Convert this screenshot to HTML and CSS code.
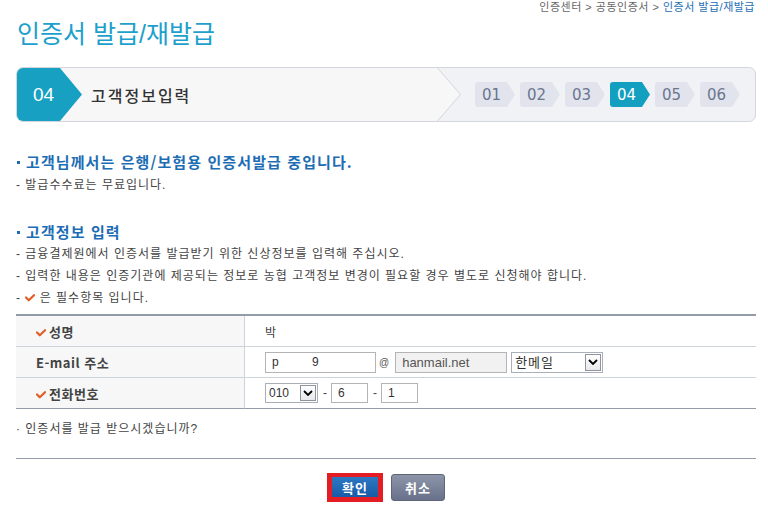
FILE: index.html
```html
<!DOCTYPE html>
<html lang="ko">
<head>
<meta charset="utf-8">
<title>인증서 발급/재발급</title>
<link rel="stylesheet" href="styles.css">
</head>
<body>
<div class="page">
  <div class="crumb">인증센터 &gt; 공동인증서 &gt; <span class="crumb-on">인증서 발급/재발급</span></div>
  <h1 class="title">인증서 발급/재발급</h1>

  <div class="stepbar">
    <div class="step-cur">
      <div class="step-cur-in">
        <span class="badge">04</span>
        <span class="step-name">고객정보입력</span>
      </div>
    </div>
    <ol class="steps">
      <li class="step">01</li>
      <li class="step">02</li>
      <li class="step">03</li>
      <li class="step step-on">04</li>
      <li class="step">05</li>
      <li class="step">06</li>
    </ol>
  </div>

  <h2 class="sec sec-first">고객님께서는 은행/보험용 인증서발급 중입니다.</h2>
  <p class="desc">- 발급수수료는 무료입니다.</p>

  <h2 class="sec sec-second">고객정보 입력</h2>
  <p class="desc">- 금융결제원에서 인증서를 발급받기 위한 신상정보를 입력해 주십시오.</p>
  <p class="desc">- 입력한 내용은 인증기관에 제공되는 정보로 농협 고객정보 변경이 필요할 경우 별도로 신청해야 합니다.</p>
  <p class="desc">- <svg class="chk" width="10" height="8" viewBox="0 0 10 8"><polyline points="1,3.5 3.8,6.3 9,1.2" fill="none" stroke="#e2612b" stroke-width="2.3" stroke-linecap="round" stroke-linejoin="round"/></svg> 은 필수항목 입니다.</p>

  <table class="form">
    <tr>
      <th class="lbl"><svg class="chk" width="10" height="8" viewBox="0 0 10 8"><polyline points="1,3.5 3.8,6.3 9,1.2" fill="none" stroke="#e2612b" stroke-width="2.3" stroke-linecap="round" stroke-linejoin="round"/></svg>성명</th>
      <td class="val">박</td>
    </tr>
    <tr>
      <th class="lbl">E-mail 주소</th>
      <td class="val">
        <div class="fields">
          <input class="inp inp-id" type="text" value="p          9">
          <span class="at">@</span>
          <input class="inp inp-dom" type="text" value="hanmail.net" readonly>
          <span class="sel sel-mail"><select class="sel-box"><option>한메일</option></select><span class="sel-arrow"><svg width="10" height="6" viewBox="0 0 10 6"><polyline points="1,1 5,5 9,1" fill="none" stroke="#000" stroke-width="1.8"/></svg></span></span>
        </div>
      </td>
    </tr>
    <tr>
      <th class="lbl"><svg class="chk" width="10" height="8" viewBox="0 0 10 8"><polyline points="1,3.5 3.8,6.3 9,1.2" fill="none" stroke="#e2612b" stroke-width="2.3" stroke-linecap="round" stroke-linejoin="round"/></svg>전화번호</th>
      <td class="val">
        <div class="fields">
          <span class="sel sel-tel"><select class="sel-box"><option>010</option></select><span class="sel-arrow"><svg width="10" height="6" viewBox="0 0 10 6"><polyline points="1,1 5,5 9,1" fill="none" stroke="#000" stroke-width="1.8"/></svg></span></span>
          <span class="dash">-</span>
          <input class="inp inp-tel" type="text" value="6">
          <span class="dash">-</span>
          <input class="inp inp-tel" type="text" value="1">
        </div>
      </td>
    </tr>
  </table>

  <p class="ask">· 인증서를 발급 받으시겠습니까?</p>
  <hr class="rule">

  <div class="btns">
    <button class="btn btn-ok" type="button">확인</button>
    <button class="btn btn-cancel" type="button">취소</button>
  </div>
</div>
</body>
</html>
```

FILE: styles.css
```css
html, body {
  margin: 0;
  padding: 0;
  background: #fff;
}
body {
  font-family: "Liberation Sans", "Noto Sans CJK KR", sans-serif;
  color: #444;
  font-size: 12px;
}
.page {
  padding: 0 12px 0 16px;
}
.crumb {
  height: 14px;
  line-height: 14px;
  font-size: 11px;
  text-align: right;
  padding-right: 1px;
  color: #666;
  letter-spacing: 0.5px;
}
.crumb-on {
  color: #1e6fb5;
}
.title {
  margin: 5px 0 18px 1px;
  font-size: 25px;
  line-height: 30px;
  font-weight: normal;
  color: #1ea0cc;
}

/* step bar */
.stepbar {
  display: flex;
  align-items: center;
  height: 53px;
  border: 1px solid #d3d6dc;
  border-radius: 7px;
  background: #f1f2f5;
  overflow: hidden;
}
.step-cur {
  width: 444px;
  height: 100%;
  background: #d3d6dc;
  clip-path: polygon(0 0, 421px 0, 444px 50%, 421px 100%, 0 100%);
}
.step-cur-in {
  display: flex;
  align-items: center;
  height: 100%;
  background: #f7f7f7;
  clip-path: polygon(0 0, 420px 0, 443px 50%, 420px 100%, 0 100%);
}
.badge {
  width: 65px;
  height: 100%;
  box-sizing: border-box;
  padding-left: 16px;
  display: flex;
  align-items: center;
  background: #17a0c2;
  color: #fff;
  font-family: "Liberation Sans", sans-serif;
  font-size: 19px;
  clip-path: polygon(0 0, 43px 0, 65px 50%, 43px 100%, 0 100%);
}
.step-name {
  margin-left: 9px;
  font-family: "Noto Sans CJK KR", sans-serif;
  font-size: 16px;
  font-weight: 500;
  letter-spacing: 2px;
  color: #333;
}
.steps {
  list-style: none;
  margin: 0 15px 0 auto;
  padding: 0;
  display: flex;
  gap: 5px;
}
.step {
  width: 40px;
  height: 25px;
  box-sizing: border-box;
  padding-right: 7px;
  display: flex;
  align-items: center;
  justify-content: center;
  background: #e1e4ec;
  color: #6b7590;
  border-radius: 3px 0 0 3px;
  font-family: "DejaVu Sans", sans-serif;
  font-size: 15px;
  clip-path: polygon(0 0, 32px 0, 40px 50%, 32px 100%, 0 100%);
}
.step-on {
  background: #139fc0;
  color: #fff;
}

/* sections */
.sec {
  margin: 0 0 2px 1px;
  font-family: "Noto Sans CJK KR", sans-serif;
  font-size: 15px;
  line-height: 20px;
  font-weight: bold;
  letter-spacing: 1.1px;
  color: #1d6db4;
  display: flex;
  align-items: center;
}
.sec::before {
  content: "";
  width: 3px;
  height: 3px;
  background: #1d6db4;
  margin-right: 6px;
}
.sec-first {
  margin-top: 30px;
}
.sec-second {
  margin-top: 26px;
  margin-bottom: 1px;
}
.desc {
  margin: 0;
  line-height: 22px;
  letter-spacing: 1px;
  color: #444;
}
.chk {
  vertical-align: 0;
}

/* form table */
.form {
  width: 100%;
  border-collapse: separate;
  border-spacing: 0;
  border-top: 2px solid #939ba8;
  margin-top: 5px;
}
.form th, .form td {
  height: 30px;
  padding: 0;
  border-bottom: 1px solid #cdd3dc;
}
.form tr:last-child th, .form tr:last-child td {
  border-bottom-color: #939ba8;
}
.lbl {
  width: 208px;
  padding-left: 20px !important;
  text-align: left;
  background: #f7f7f7;
  border-right: 1px solid #cdd3dc;
  font-family: "Noto Sans CJK KR", sans-serif;
  font-size: 13px;
  font-weight: bold;
  letter-spacing: 0.5px;
  color: #444;
}
.lbl .chk {
  margin-right: 3px;
}
.val {
  padding-left: 20px !important;
  color: #444;
}
.fields {
  display: flex;
  align-items: center;
}
.inp {
  box-sizing: border-box;
  height: 21px;
  border: 1px solid #b4b4b4;
  padding: 0 0 0 6px;
  font-family: "Liberation Sans", sans-serif;
  font-size: 12px;
  color: #333;
  background: #fff;
  white-space: pre;
}
.inp-id {
  width: 111px;
}
.at {
  margin: 0 6px 0 3px;
  font-size: 10px;
  color: #555;
}
.inp-dom {
  width: 112px;
  background: #f1f1f1;
  color: #555;
  font-size: 13px;
}
.sel {
  position: relative;
  display: inline-block;
  margin-left: 4px;
}
.sel-box {
  appearance: none;
  -webkit-appearance: none;
  box-sizing: border-box;
  height: 21px;
  border: 1px solid #a9afb8;
  border-radius: 0;
  background: #fff;
  padding: 0 0 0 3px;
  font-family: "Liberation Sans", "Noto Sans CJK KR", sans-serif;
  font-size: 12px;
  color: #333;
}
.sel-mail .sel-box {
  width: 92px;
  font-size: 13px;
  letter-spacing: 1px;
}
.sel-tel {
  margin-left: 0;
}
.sel-tel .sel-box {
  width: 53px;
  height: 20px;
}
.sel-arrow {
  position: absolute;
  right: 2px;
  top: 2px;
  bottom: 2px;
  width: 16px;
  box-sizing: border-box;
  border: 1px solid #8e949c;
  background: linear-gradient(#ffffff, #e6e8eb);
  display: flex;
  align-items: center;
  justify-content: center;
  pointer-events: none;
}
.dash {
  margin: 0 4px 0 5px;
  color: #444;
}
.inp-tel {
  width: 37px;
  height: 20px;
}

.ask {
  margin: 9px 0 0;
  line-height: 22px;
  letter-spacing: 1px;
  color: #444;
}
.rule {
  margin: 18px 0 0;
  border: 0;
  border-top: 1px solid #939ba8;
  height: 0;
}
.btns {
  display: flex;
  justify-content: center;
  align-items: center;
  gap: 8px;
  margin-top: 14px;
}
.btn {
  font-family: "Noto Sans CJK KR", sans-serif;
  font-weight: bold;
  font-size: 13px;
  letter-spacing: 1px;
  color: #fff;
  cursor: pointer;
  padding: 0;
}
.btn-ok {
  width: 56px;
  height: 29px;
  box-sizing: border-box;
  border: 5px solid #e41c24;
  border-top-width: 4px;
  background: linear-gradient(#2c78c3, #185ba6);
}
.btn-cancel {
  width: 54px;
  height: 27px;
  border: 1px solid #5d6577;
  border-radius: 3px;
  background: linear-gradient(#8c95a8, #68718a);
}
```
